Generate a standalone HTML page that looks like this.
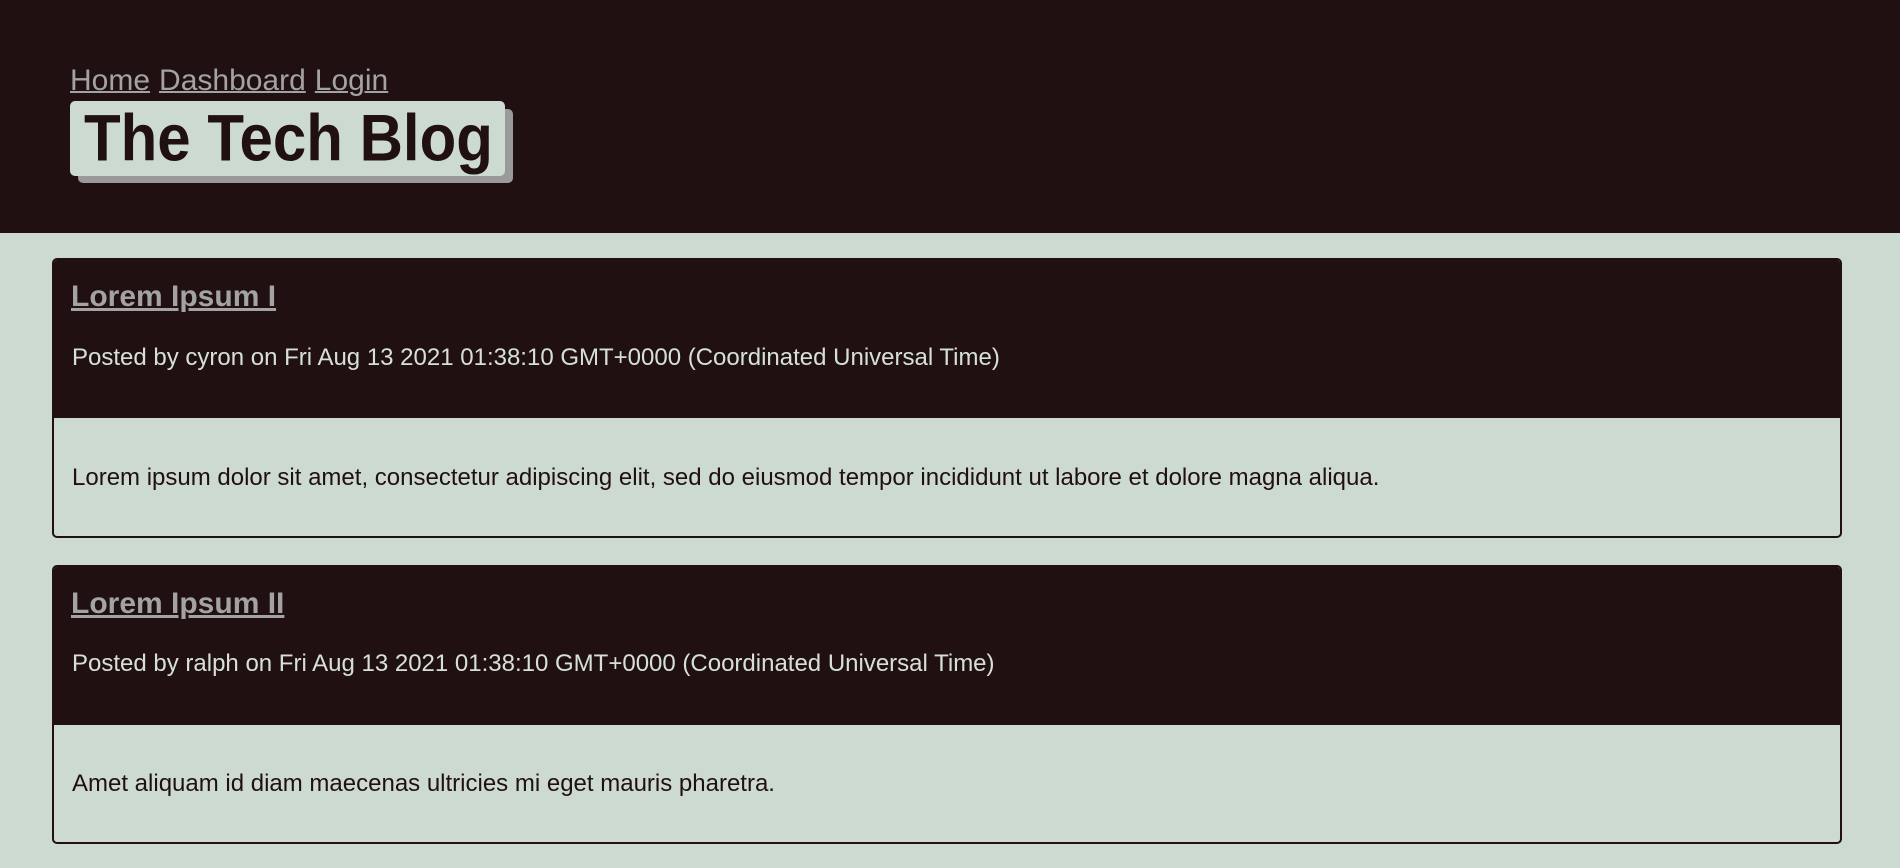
<!DOCTYPE html>
<html><head><meta charset="utf-8"><style>
*{margin:0;padding:0;box-sizing:border-box}
body{width:1900px;height:868px;background:#cddad1;font-family:"Liberation Sans",Arial,sans-serif;position:relative;overflow:hidden}
.hdr{position:absolute;left:0;top:0;width:1900px;height:233px;background:#201011}
.nav{position:absolute;left:70px;top:63px;font-size:30px;line-height:36px;white-space:nowrap}
.nav a{color:#a3a3a3;text-decoration:underline;text-decoration-thickness:2px;margin-right:9px}
.shadow{position:absolute;left:78px;top:109px;width:435px;height:74px;background:#9a9a9a;border-radius:5px}
.tbox{position:absolute;left:70px;top:101px;width:435px;height:75px;background:#cddad1;border-radius:5px}
.tbox h1{position:absolute;left:14px;top:0px;font-size:60px;line-height:68px;color:#201011;font-weight:bold;white-space:nowrap;transform:scaleY(1.1);transform-origin:left top}
.card{position:absolute;left:52px;width:1790px;border:2px solid #201011;border-radius:5px;overflow:hidden;background:#cddad1}
.card .top{position:absolute;left:0;top:0;right:0;background:#201011}
.card .t{position:absolute;left:17px;font-size:30px;font-weight:bold;color:#a3a3a3;text-decoration:underline;white-space:nowrap;line-height:34px}
.card .p{position:absolute;left:18px;font-size:24px;color:#d6e0d9;white-space:nowrap;line-height:28px}
.card .b{position:absolute;left:18px;font-size:24px;color:#201011;white-space:nowrap;line-height:28px}
</style></head><body>
<div class="hdr">
<div class="nav"><a>Home</a><a>Dashboard</a><a>Login</a></div>
<div class="shadow"></div>
<div class="tbox"><h1>The Tech Blog</h1></div>
</div>
<div class="card" style="top:258px;height:280px">
<div class="top" style="height:158px"></div>
<div class="t" style="top:20px">Lorem Ipsum I</div>
<div class="p" style="top:84px">Posted by cyron on Fri Aug 13 2021 01:38:10 GMT+0000 (Coordinated Universal Time)</div>
<div class="b" style="top:204px">Lorem ipsum dolor sit amet, consectetur adipiscing elit, sed do eiusmod tempor incididunt ut labore et dolore magna aliqua.</div>
</div>
<div class="card" style="top:565px;height:279px">
<div class="top" style="height:158px"></div>
<div class="t" style="top:20px">Lorem Ipsum II</div>
<div class="p" style="top:83px">Posted by ralph on Fri Aug 13 2021 01:38:10 GMT+0000 (Coordinated Universal Time)</div>
<div class="b" style="top:203px">Amet aliquam id diam maecenas ultricies mi eget mauris pharetra.</div>
</div>
</body></html>
